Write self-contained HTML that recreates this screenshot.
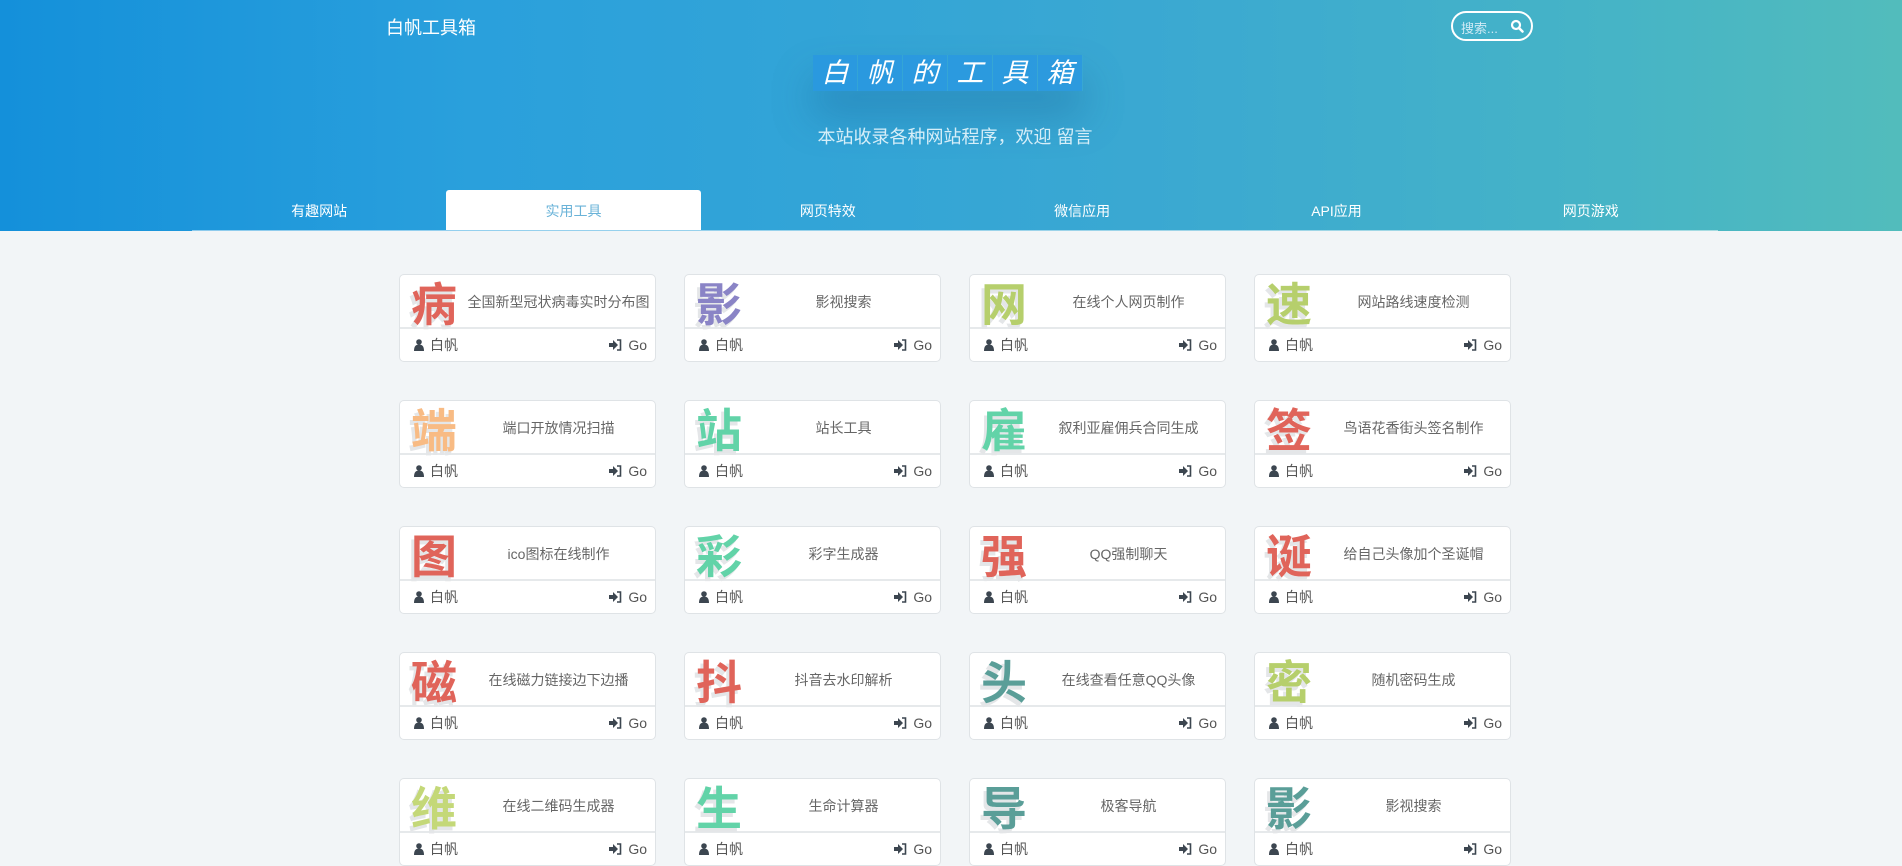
<!DOCTYPE html>
<html><head><meta charset="utf-8">
<style>
*{margin:0;padding:0;box-sizing:border-box}
body{width:1902px;height:818px;overflow:hidden;background:#f2f5f7;font-family:"Liberation Sans","Noto Sans CJK SC",sans-serif;position:relative}
.hd{position:absolute;left:0;top:0;width:1902px;height:231px;background:linear-gradient(90deg,#1490da 0%,#2aa0dc 25%,#3aa8d2 60%,#46b4c6 85%,#52bcbc 100%)}
.logo{position:absolute;left:386px;top:14px;color:#fff;font-size:18px}
.search{position:absolute;left:1451px;top:11px;width:82px;height:30px;border:2px solid #fff;border-radius:15px;color:#cfeaf5;font-size:13px;padding:5px 0 0 8px}
.search svg{position:absolute;right:7px;top:6px}
.title{position:absolute;left:813px;top:55px;height:36px;display:flex;box-shadow:0 24px 40px rgba(20,90,140,.35)}
.title span{display:block;width:44px;text-align:center;color:#fff;font-size:27px;font-style:italic;line-height:36px;background:rgba(40,150,225,.75);margin-right:1px}
.sub{position:absolute;left:9px;width:1892px;text-align:center;top:123px;color:#d6eef8;font-size:18px}
.tabs{position:absolute;left:192px;top:190px;width:1526px;height:41px;display:flex;border-bottom:1px solid rgba(255,255,255,.5)}
.tabs div{flex:1;text-align:center;color:#fff;font-size:14px;line-height:42px}
.tabs .on{background:#fff;color:#6ab3d8;border-radius:3px 3px 0 0}
.card{position:absolute;width:257px;height:88px;background:#fff;border:1px solid #dfe3e6;border-radius:5px}
.card .top{height:54px;border-bottom:2px solid #e6e9eb;position:relative}
.card .ch{position:absolute;left:11px;top:1px;font-size:46px;font-weight:bold;line-height:52px;font-family:"Noto Sans CJK SC",sans-serif;text-shadow:-3px 4px 0 #e4e6e8}
.card .t{position:absolute;left:62px;right:0;top:17px;text-align:center;font-size:14px;color:#666}
.card .ft{height:31px;position:relative;font-size:14px;color:#555;line-height:16px}
.card .u{position:absolute;left:14px;top:8px}
.card .g{position:absolute;right:8px;top:8px}
.ic{display:inline-block;vertical-align:-1px;margin-right:6px}
</style></head><body>
<div class="hd">
<div class="logo">白帆工具箱</div>
<div class="search">搜索...<svg width="14" height="14" viewBox="0 0 14 14"><circle cx="6" cy="6" r="4" fill="none" stroke="#fff" stroke-width="2.2"/><path d="M9 9l3.5 3.5" stroke="#fff" stroke-width="2.5" stroke-linecap="round"/></svg></div>
<div class="title"><span>白</span><span>帆</span><span>的</span><span>工</span><span>具</span><span>箱</span></div>
<div class="sub">本站收录各种网站程序，欢迎 留言</div>
<div class="tabs"><div>有趣网站</div><div class="on">实用工具</div><div>网页特效</div><div>微信应用</div><div>API应用</div><div>网页游戏</div></div>
</div>
<div id="cards"></div>
<script>
var d=[["病","#e0645a","全国新型冠状病毒实时分布图"],["影","#8a84c6","影视搜索"],["网","#b6cf6c","在线个人网页制作"],["速","#b6cf6c","网站路线速度检测"],
["端","#f8bb84","端口开放情况扫描"],["站","#62d3a8","站长工具"],["雇","#62d3a8","叙利亚雇佣兵合同生成"],["签","#e0645a","鸟语花香街头签名制作"],
["图","#e0645a","ico图标在线制作"],["彩","#62d3a8","彩字生成器"],["强","#e0645a","QQ强制聊天"],["诞","#e0645a","给自己头像加个圣诞帽"],
["磁","#e0645a","在线磁力链接边下边播"],["抖","#e0645a","抖音去水印解析"],["头","#5a9e98","在线查看任意QQ头像"],["密","#b6cf6c","随机密码生成"],
["维","#c4d878","在线二维码生成器"],["生","#62d3a8","生命计算器"],["导","#5a9e98","极客导航"],["影","#5a9e98","影视搜索"]];
var xs=[399,684,969,1254],h="";
var user='<svg class="ic" width="10" height="12" viewBox="0 0 10 12"><circle cx="5" cy="3" r="2.8" fill="#3c4650"/><path d="M0 12c0-5 2-6.5 5-6.5s5 1.5 5 6.5z" fill="#3c4650"/></svg>';
var go='<svg class="ic" width="13" height="12" viewBox="0 0 13 12"><path d="M0 4h4V1l5 5-5 5V8H0z" fill="#3c4650"/><path d="M8 1h3.5v10H8" fill="none" stroke="#3c4650" stroke-width="1.6"/></svg>';
d.forEach(function(c,i){var x=xs[i%4],y=274+126*Math.floor(i/4);
h+='<div class="card" style="left:'+x+'px;top:'+y+'px"><div class="top"><div class="ch" style="color:'+c[1]+'">'+c[0]+'</div><div class="t">'+c[2]+'</div></div><div class="ft"><span class="u">'+user+'白帆</span><span class="g">'+go+'Go</span></div></div>';});
document.getElementById("cards").innerHTML=h;
</script>
</body></html>
